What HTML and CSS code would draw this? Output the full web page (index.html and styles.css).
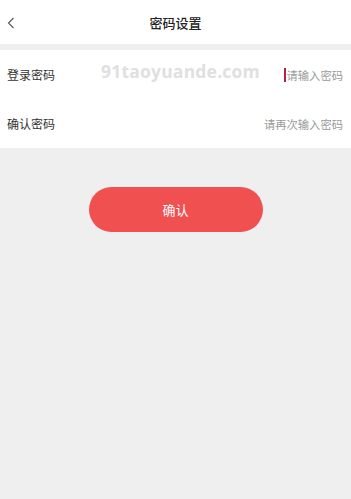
FILE: index.html
```html
<!DOCTYPE html>
<html lang="zh">
<head>
<meta charset="utf-8">
<title>密码设置</title>
<link rel="stylesheet" href="styles.css">
</head>
<body>
<div class="page">
  <header class="nav">
    <span class="back">
      <svg width="8" height="12" viewBox="0 0 8 12"><path d="M6.5 1 L1.5 6 L6.5 11" fill="none" stroke="#555" stroke-width="1.1"/></svg>
    </span>
    <h1 class="title">密码设置</h1>
  </header>
  <section class="form">
    <div class="row">
      <span class="label">登录密码</span>
      <span class="field"><span class="cursor"></span>请输入密码</span>
      <span class="watermark">91taoyuande.com</span>
    </div>
    <div class="row">
      <span class="label">确认密码</span>
      <span class="field">请再次输入密码</span>
    </div>
  </section>
  <div class="actions">
    <button class="submit">确认</button>
  </div>
</div>
</body>
</html>
```
FILE: styles.css
```css
* { box-sizing: border-box; }
html, body { margin: 0; padding: 0; }
body {
  background: #efefef;
  font-family: "Noto Sans CJK SC", "Noto Sans", sans-serif;
  width: 351px;
  height: 499px;
  overflow: hidden;
}
.page { display: flex; flex-direction: column; }
.nav {
  height: 44px;
  background: #fff;
  display: flex;
  align-items: center;
  justify-content: center;
  position: relative;
  margin-bottom: 6px;
}
.back {
  position: absolute;
  left: 7px;
  top: 17px;
  display: flex;
}
.title {
  margin: 0;
  font-size: 13px;
  font-weight: 500;
  color: #222;
}
.form {
  background: #fff;
  display: flex;
  flex-direction: column;
}
.row {
  height: 49px;
  display: flex;
  align-items: center;
  justify-content: space-between;
  padding: 0 8px 0 7px;
  position: relative;
}
.label {
  font-size: 12px;
  color: #333;
}
.field {
  font-size: 11.3px;
  color: #9a9a9a;
  display: flex;
  align-items: center;
}
.cursor {
  width: 2px;
  height: 14px;
  background: #b0234d;
  margin-right: 1px;
}
.watermark {
  position: absolute;
  left: 101px;
  top: 9px;
  font-family: "Open Sans", sans-serif;
  font-weight: 700;
  font-size: 17.5px;
  color: #e0e0e0;
  letter-spacing: 0.2px;
}
.actions {
  display: flex;
  justify-content: center;
  padding-top: 39px;
}
.submit {
  width: 174px;
  height: 45px;
  border: none;
  border-radius: 23px;
  background: #f05050;
  color: #fff;
  font-family: "Noto Sans CJK SC", sans-serif;
  font-size: 13px;
  padding: 0;
}
```
